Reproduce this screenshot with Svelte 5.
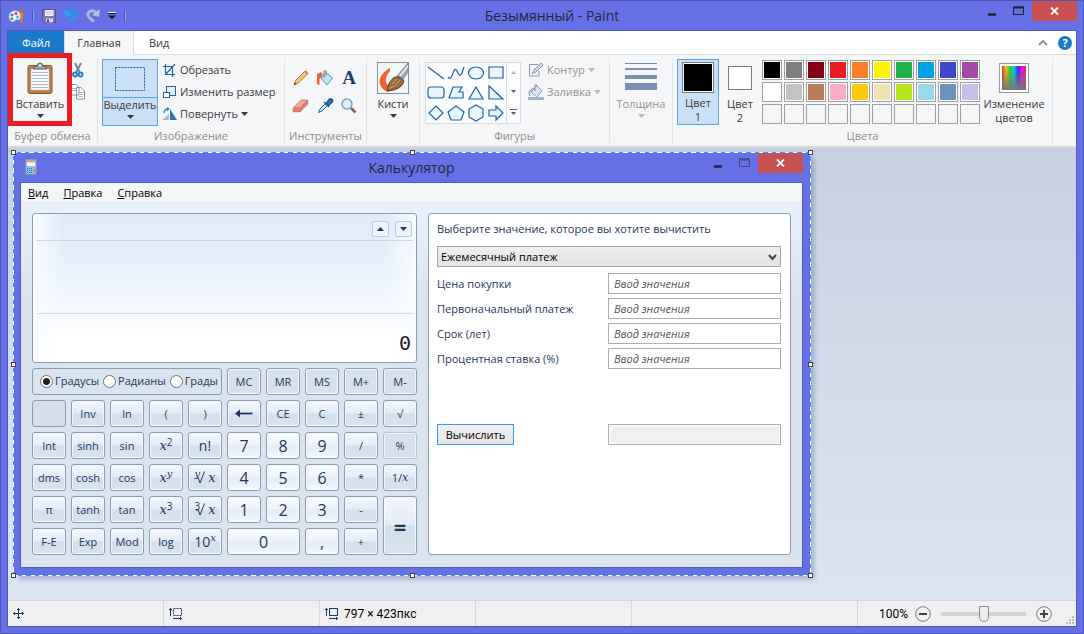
<script>
    const PALETTE = [
        "#000000", "#7f7f7f", "#880015", "#ed1c24", "#ff7f27",
        "#fff200", "#22b14c", "#00a2e8", "#3f48cc", "#a349a4",
        "#ffffff", "#c3c3c3", "#b97a57", "#ffaec9", "#ffc90e",
        "#efe4b0", "#b5e61d", "#99d9ea", "#7092be", "#c8bfe7",
        "", "", "", "", "", "", "", "", "", "",
    ];

    const SHAPES = [
        "M2 4 L18 16",
        "M2 14 C7 20 7 1 11 8 C14 15 15 13 18 4",
        "M10 4 C20 4 20 16 10 16 C0 16 0 4 10 4 Z",
        "M3 4 H17 V15 H3 Z",
        "M5 4 H15 Q18 4 18 7 V12 Q18 15 15 15 H5 Q2 15 2 12 V7 Q2 4 5 4 Z",
        "M7 4 H16 L13 9 H17 V15 H3 Z",
        "M10 4 L17 16 H3 Z",
        "M3 3 L17 16 H3 Z",
        "M10 3 L17 10 L10 17 L3 10 Z",
        "M10 3 L18 9 L15 17 H5 L2 9 Z",
        "M10 2 L17 6 V14 L10 18 L3 14 V6 Z",
        "M3 7 H10 V3 L17 10 L10 17 V13 H3 Z",
    ];

    // base/sup/root: parts of the formula keys, kind: look and span
    const KEYS = [
        { text: "MC", kind: "memory" }, { text: "MR", kind: "memory" }, { text: "MS", kind: "memory" },
        { text: "M+", kind: "memory" }, { text: "M-", kind: "memory" },
        { text: "", kind: "blank" }, { text: "Inv" }, { text: "ln" }, { text: "(" }, { text: ")" },
        { arrow: true }, { text: "CE" }, { text: "C" }, { text: "±" }, { text: "√" },
        { text: "Int" }, { text: "sinh" }, { text: "sin" }, { base: "x", sup: "2" }, { text: "n!", kind: "large" },
        { text: "7", kind: "digit" }, { text: "8", kind: "digit" }, { text: "9", kind: "digit" }, { text: "/" }, { text: "%", kind: "off" },
        { text: "dms" }, { text: "cosh" }, { text: "cos" }, { base: "x", sup: "y", italic: true }, { root: "y" },
        { text: "4", kind: "digit" }, { text: "5", kind: "digit" }, { text: "6", kind: "digit" }, { text: "*" }, { fraction: true },
        { text: "π" }, { text: "tanh" }, { text: "tan" }, { base: "x", sup: "3" }, { root: "3" },
        { text: "1", kind: "digit" }, { text: "2", kind: "digit" }, { text: "3", kind: "digit" }, { text: "-" }, { text: "=", kind: "equals" },
        { text: "F-E" }, { text: "Exp" }, { text: "Mod" }, { text: "log" }, { power: true },
        { text: "0", kind: "digit wide" }, { text: ",", kind: "digit" }, { text: "+" },
    ];

    const ANGLES = ["Градусы", "Радианы", "Грады"];
    const FIELDS = ["Цена покупки", "Первоначальный платеж", "Срок (лет)", "Процентная ставка (%)"];
    const HANDLES = ["nw", "n", "ne", "e", "se", "s", "sw", "w"];

    let angle = $state("Градусы");
    let zoom = $state(50);
</script>

{#snippet down()}
    <svg class="down" width="7" height="4" viewBox="0 0 7 4"><path d="M0 0 H7 L3.5 4 Z" fill="currentColor" /></svg>
{/snippet}

{#snippet windowButtons(dim)}
    <div class="window-buttons">
        <button aria-label="Свернуть"><svg width="10" height="10"><path d="M1 8.5 H9" stroke="#22242c" stroke-width="2.4" /></svg></button>
        <button aria-label="Развернуть" class:dim><svg width="11" height="10"><path d="M.5 1 H10.5 M.5 1 V8.5 H10.5 V1" fill="none" stroke="#22242c" stroke-width="1.2" /><path d="M0 1.5 H11" stroke="#22242c" stroke-width="2" /></svg></button>
        <button aria-label="Закрыть" class="close"><svg width="9" height="8"><path d="M1 .5 L8 7.5 M8 .5 L1 7.5" stroke="#fff" stroke-width="1.8" /></svg></button>
    </div>
{/snippet}

<div class="paint">
    <header class="titlebar">
        <div class="quick">
            <svg width="16" height="16" viewBox="0 0 16 16">
                <path d="M1 9 C1 4 5 2 9 3 C13 4 14 8 12 11 C11 13 9 11 7.500 12 C6 15 1 14 1 9Z" fill="#eef5fb" stroke="#8eaed0" stroke-width=".7" />
                <circle cx="4" cy="7" r="1.500" fill="#3c7bd0" /><circle cx="8" cy="5.500" r="1.500" fill="#d9403a" />
                <circle cx="3.800" cy="10.800" r="1.500" fill="#3fae49" /><circle cx="9.500" cy="9" r="1.500" fill="#4fb4ee" />
                <path d="M12 5 L12.500 15 L14 15 L15 5 Z" fill="#e8842c" /><path d="M11.500 5 L12.500 1 L15.500 0 L15.500 5Z" fill="#b86f42" />
            </svg>
            <i class="quick-sep"></i>
            <button aria-label="Сохранить" class="save"><svg width="14" height="14" viewBox="0 0 14 14"><path d="M.5 .5 H13.500 V13.500 H2 L.5 12Z" fill="#8574b4" stroke="#5d4f96" /><path d="M3 1 H11.500 V7 H3Z" fill="#f4f4fa" /><path d="M4 3 H10.500 M4 5 H10.500" stroke="#c0bedc" /><path d="M4 9.500 H11 V13.500 H4Z" fill="#d6d7e6" /><path d="M5 10.500 H7 V13.500 H5Z" fill="#494270" /></svg></button>
            <button aria-label="Отменить"><svg width="14" height="15" viewBox="0 0 14 15"><path d="M3 5 C8 0 15 5 11 9 C10 11 8 12 6 13.500" fill="none" stroke="#1e9bec" stroke-width="3" /><path d="M0 1 L1 9 L8 7Z" fill="#25a4ef" /></svg></button>
            <button aria-label="Повторить"><svg width="14" height="15" viewBox="0 0 14 15"><path d="M11 5 C6 0 -1 5 3 9 C4 11 6 12 8 13.500" fill="none" stroke="#aab9d4" stroke-width="3" /><path d="M14 1 L13 9 L6 7Z" fill="#b4c3da" /></svg></button>
            <button aria-label="Настройка панели" class="more"><svg width="8" height="7"><path d="M0 .5 H8" stroke="#fff" /><path d="M0 1.500 H8" stroke="#111" /><path d="M0 3.500 H8 L4 7Z" fill="#111" /></svg></button>
            <i class="quick-sep"></i>
        </div>
        <h1>Безымянный - Paint</h1>
        {@render windowButtons(false)}
    </header>

    <main class="client">
        <nav class="tabs">
            <button class="tab file">Файл</button>
            <button class="tab active">Главная</button>
            <button class="tab">Вид</button>
            <span class="tabs-rest">
                <svg width="10" height="6"><path d="M1 5 L5 1 L9 5" fill="none" stroke="#929292" stroke-width="2" /></svg>
                <button class="help" aria-label="Справка">?</button>
            </span>
        </nav>

        <div class="ribbon">
            <section class="group clipboard">
                <div class="group-body">
                    <button class="big paste">
                        <svg width="28" height="32" viewBox="0 0 28 32">
                            <rect x="2" y="3.500" width="24" height="28" rx="2" fill="#b98042" stroke="#87582c" />
                            <path d="M5 7 H23 V28 H5Z" fill="#fdfdff" stroke="#c8c8d4" stroke-width=".6" />
                            <path d="M6 10.500 H22 M6 13.500 H22 M6 16.500 H22 M6 19.500 H22 M6 22.500 H22 M6 25.500 H22" stroke="#b2b9d8" />
                            <path d="M7 7 Q7 4 11 4 Q11 1 14 1 Q17 1 17 4 Q21 4 21 7Z" fill="#a2a6ac" stroke="#595e66" /><circle cx="14" cy="3.500" r="1" fill="#fff" />
                        </svg>
                        <span>Вставить</span>
                        {@render down()}
                    </button>
                    <div class="mini">
                        <button aria-label="Вырезать"><svg width="16" height="16" viewBox="0 0 16 16"><path d="M4 1 L9 11 M10 1 L5 11" stroke="#697f9d" stroke-width="1.800" /><circle cx="4" cy="12.500" r="2" fill="none" stroke="#1c7bd1" stroke-width="1.800" /><circle cx="9.500" cy="12.500" r="2" fill="none" stroke="#1c7bd1" stroke-width="1.800" /></svg></button>
                        <button aria-label="Копировать"><svg width="18" height="17" viewBox="0 0 18 17"><path d="M-1 1.500 H5 L8 4.500 V12 H-1Z M5.500 4.500 H10 L13.500 8 V16 H5.500Z" fill="#fff" stroke="#8a8f96" /><path d="M1 5.500 H5 M1 7.500 H5 M7.500 9.500 H11.500 M7.500 11.500 H11.500 M7.500 13.500 H11.500" stroke="#9db4cf" /></svg></button>
                    </div>
                </div>
                <h2>Буфер обмена</h2>
            </section>

            <section class="group image">
                <div class="group-body">
                    <div class="split">
                        <button aria-label="Прямоугольная область"><svg width="32" height="26" viewBox="0 0 32 26"><rect x="1.500" y="1.500" width="29" height="23" fill="none" stroke="#1667a8" stroke-dasharray="2 1" /></svg></button>
                        <button class="split-label">Выделить {@render down()}</button>
                    </div>
                    <div class="commands">
                        <button><svg width="15" height="15" viewBox="0 0 15 15"><path d="M1 3.500 H10.500 V14 M3.500 1 V11.500 H13 M3.500 11.500 L13 1" fill="none" stroke="#1c65a6" stroke-width="1.200" /></svg>Обрезать</button>
                        <button><svg width="15" height="15" viewBox="0 0 15 15"><rect x="4.500" y="1.500" width="9" height="9" fill="#e8f2fd" stroke="#1c65a6" /><rect x="1.500" y="7.500" width="6" height="5" fill="#fff" stroke="#1c65a6" /></svg>Изменить размер</button>
                        <button><svg width="15" height="15" viewBox="0 0 15 15"><path d="M0 13 L7 7 V13Z" fill="#b8bcc2" /><path d="M8 2 V13 H15Z" fill="#2677b9" /><path d="M2 6 Q2 2 6 2" fill="none" stroke="#2e87ca" stroke-width="1.300" /><path d="M5 0 L8 2 L5 4Z" fill="#2e87ca" /></svg>Повернуть {@render down()}</button>
                    </div>
                </div>
                <h2>Изображение</h2>
            </section>

            <section class="group tools">
                <div class="group-body tool-grid">
                    <button aria-label="Карандаш"><svg viewBox="0 0 18 18"><path d="M2 16 L3.500 11.500 L12.500 2.500 L15.500 5 L6.500 14Z" fill="#f3c375" stroke="#9d6a3b" stroke-width=".8" /><path d="M12.500 2.500 L14 1.500 L16.500 4 L15.500 5Z" fill="#d86c62" /><path d="M2 16 L3 13.500 L4.500 15Z" fill="#333" /></svg></button>
                    <button aria-label="Заливка"><svg viewBox="0 0 18 18"><path d="M5 9 L10 3.500 L16.500 9 L11 16Z" fill="#c4e4f6" stroke="#5893bb" /><path d="M1 5 L5 3 L7 6 L3.500 10 V16 Q0 16 1 10Z" fill="#ec6334" /><path d="M8 9 V3 Q8 .5 10 2 V7" fill="none" stroke="#747e8a" /></svg></button>
                    <button aria-label="Текст" class="letter">A</button>
                    <button aria-label="Ластик"><svg viewBox="0 0 18 18"><path d="M1 11 L9 3 H16 L8 11Z" fill="#f3a59b" stroke="#c17167" stroke-width=".7" /><path d="M1 11 H8 V15 H1Z M8 11 L16 3 V7 L8 15Z" fill="#df8176" stroke="#c17167" stroke-width=".5" /></svg></button>
                    <button aria-label="Палитра"><svg viewBox="0 0 18 18"><path d="M2.500 15.500 L4 12 L10 6 L12 8 L6 14Z" fill="#c8e5fa" stroke="#2e5d91" /><path d="M8 5 L13 10 M10 7 L13 2.500 Q15 1 16.500 3 Q17 5 15 6 L12 9Z" fill="#2a77bb" stroke="#1c5690" stroke-width="1.500" /></svg></button>
                    <button aria-label="Масштаб"><svg viewBox="0 0 18 18"><circle cx="7" cy="7" r="5" fill="#d9edfc" stroke="#8b9db5" stroke-width="1.500" /><path d="M11 11 L15.500 15.500" stroke="#8e6041" stroke-width="2.500" /></svg></button>
                </div>
                <h2>Инструменты</h2>
            </section>

            <section class="group brushes">
                <div class="group-body">
                    <button class="big">
                        <svg width="32" height="32" viewBox="0 0 32 32">
                            <rect x=".5" y=".5" width="31" height="31" fill="#f2f5fa" stroke="#8b929c" />
                            <path d="M13 6 C0 13 -1 25 11 30 L19 26 C9 25 5 18 13 9Z" fill="#ef642b" />
                            <path d="M20 14 L31 1 V10 L25 19Z" fill="#9ea9b9" stroke="#5f6c7e" stroke-width=".6" /><path d="M23 14 L31 4" stroke="#f4f6fa" stroke-width="1.500" />
                            <path d="M10 29 Q11 19 18 15 Q24 14 27 19 Q25 28 10 29Z" fill="#9a6c3d" stroke="#664425" /><path d="M13 26 Q19 25 23 18 M15 22 L20 17" stroke="#d0a874" fill="none" />
                        </svg>
                        <span>Кисти</span>
                        {@render down()}
                    </button>
                </div>
            </section>

            <section class="group shapes">
                <div class="group-body">
                    <div class="gallery">
                        <div class="shape-grid">
                            {#each SHAPES as d}
                                <button aria-label="Фигура"><svg width="20" height="20" viewBox="0 0 20 20"><path {d} fill={d === SHAPES[0] || d === SHAPES[1] ? "none" : "#e9f4fc"} stroke="#1d65a4" stroke-width="1.200" /></svg></button>
                            {/each}
                        </div>
                        <div class="gallery-scroll">
                            <button aria-label="Вверх" disabled><svg width="5" height="3"><path d="M0 3 L2.500 0 L5 3Z" fill="#a5adbd" /></svg></button>
                            <button aria-label="Вниз"><svg width="5" height="3"><path d="M0 0 L2.500 3 L5 0Z" fill="#4a5a80" /></svg></button>
                            <button aria-label="Все фигуры"><svg width="7" height="6"><path d="M0 .5 H7" stroke="#4a5a80" /><path d="M1 3 L3.500 6 L6 3Z" fill="#4a5a80" /></svg></button>
                        </div>
                    </div>
                    <div class="commands off">
                        <button><svg width="16" height="16" viewBox="0 0 16 16"><path d="M10 2.500 H1.500 V14 H11 V9" fill="none" stroke="#8598b8" /><path d="M4 12 L6 8 L13 1 L15 3 L8 10Z" fill="#d1d8e5" stroke="#8798b3" /></svg>Контур {@render down()}</button>
                        <button><svg width="16" height="16" viewBox="0 0 16 16"><path d="M0 13 H16 V16 H0Z" fill="#a3b1ca" /><path d="M3 8 L9 2 L14 7 L9 13Z" fill="#dce4ef" stroke="#8da0bd" /><path d="M2 12 Q0 8 3 6 L6 4 M7 7 V2 Q8 0 9 2" fill="none" stroke="#92a4c0" stroke-width="1.500" /></svg>Заливка {@render down()}</button>
                    </div>
                </div>
                <h2>Фигуры</h2>
            </section>

            <section class="group thickness">
                <div class="group-body">
                    <button class="big off">
                        <svg width="32" height="32" viewBox="0 0 32 32"><path d="M0 1 H32 V2 H0Z M0 6 H32 V8 H0Z M0 13 H32 V17 H0Z M0 21 H32 V28 H0Z" fill="#7b8fb2" /></svg>
                        <span>Толщина</span>
                        {@render down()}
                    </button>
                </div>
            </section>

            <section class="group colors">
                <div class="group-body">
                    <button class="big color-pick chosen"><span class="sample"><i></i></span><span>Цвет</span><span>1</span></button>
                    <button class="big color-pick"><span class="sample second"><i></i></span><span>Цвет</span><span>2</span></button>
                    <div class="palette">
                        {#each PALETTE as color}
                            <button aria-label="Цвет {color}" class:empty={!color}><i style:background={color}></i></button>
                        {/each}
                    </div>
                    <button class="big edit-colors">
                        <span class="spectrum"></span>
                        <span>Изменение</span>
                        <span>цветов</span>
                    </button>
                </div>
                <h2>Цвета</h2>
            </section>
        </div>

        <div class="canvas">
            <div class="selection">
                {#each HANDLES as side}<i class="handle {side}"></i>{/each}
                <article class="calc">
                    <header class="calc-title">
                        <svg width="12" height="16" viewBox="0 0 12 16"><rect x=".5" y=".5" width="11" height="15" fill="#8fc0e4" stroke="#6595be" /><path d="M1 1.500 H11" stroke="#f2a136" stroke-width="1.500" /><path d="M2 3.500 H10 V7 H2Z" fill="#f5faff" /><path d="M2 9.500 H8 M2 11.500 H8 M2 13.500 H8" stroke="#3775af" stroke-dasharray="1 1" /><path d="M9 10 H10.500 V14 H9Z" fill="#ea7c2f" /></svg>
                        <h1>Калькулятор</h1>
                        {@render windowButtons(true)}
                    </header>
                    <div class="calc-client">
                        <nav class="menu">
                            <button><u>В</u>ид</button>
                            <button><u>П</u>равка</button>
                            <button><u>С</u>правка</button>
                        </nav>
                        <div class="calc-body">
                            <div class="machine">
                                <div class="display">
                                    <div class="history">
                                        <button aria-label="Вверх"><svg width="7" height="4"><path d="M0 4 L3.500 0 L7 4Z" fill="#1e395b" /></svg></button>
                                        <button aria-label="Вниз"><svg width="7" height="4"><path d="M0 0 L3.500 4 L7 0Z" fill="#1e395b" /></svg></button>
                                    </div>
                                    <output class="result">0</output>
                                </div>
                                <div class="keypad">
                                    <fieldset class="angles">
                                        {#each ANGLES as name}
                                            <label><input type="radio" name="angle" value={name} bind:group={angle} />{name}</label>
                                        {/each}
                                    </fieldset>
                                    {#each KEYS as key}
                                        <button class="key {key.kind ?? ''}" aria-label={key.kind === "blank" ? "Пусто" : null} disabled={key.kind === "off" || key.kind === "blank"}>
                                            {#if key.arrow}
                                                <svg width="18" height="9" aria-label="Backspace"><path d="M3 4.500 H17.500" stroke="#1e395b" stroke-width="1.800" /><path d="M0 4.500 L5 .5 V8.500Z" fill="#1e395b" /></svg>
                                            {:else if key.base}
                                                <span class="math">{key.base}</span><sup class:math={key.italic}>{key.sup}</sup>
                                            {:else if key.root}
                                                <sup class="degree" class:math={key.root === "y"}>{key.root}</sup>
                                                <svg class="radical" width="9" height="13" viewBox="0 0 9 13"><path d="M0 7.500 L2 6.500 L4 12 L8.500 .5" fill="none" stroke="#1e395b" /></svg>
                                                <span class="math">x</span>
                                            {:else if key.fraction}
                                                1/<span class="math small">x</span>
                                            {:else if key.power}
                                                <span class="ten">10</span><sup class="math">x</sup>
                                            {:else}
                                                {key.text}
                                            {/if}
                                        </button>
                                    {/each}
                                </div>
                            </div>
                            <form class="mortgage" onsubmit={(e) => e.preventDefault()}>
                                <label class="question" for="target">Выберите значение, которое вы хотите вычистить</label>
                                <div class="select">
                                    <select id="target"><option>Ежемесячный платеж</option></select>
                                    <svg width="9" height="7"><path d="M1 1 L4.500 5 L8 1" fill="none" stroke="#444" stroke-width="2" /></svg>
                                </div>
                                {#each FIELDS as field, i}
                                    <div class="field">
                                        <label for="field{i}">{field}</label>
                                        <input id="field{i}" type="text" placeholder="Ввод значения" />
                                    </div>
                                {/each}
                                <div class="field total">
                                    <button type="submit" class="calculate">Вычислить</button>
                                    <input type="text" aria-label="Результат" readonly />
                                </div>
                            </form>
                        </div>
                    </div>
                </article>
            </div>
        </div>

        <footer class="status">
            <div class="cell"><svg width="11" height="11" viewBox="0 0 11 11"><path d="M0 5.500 H11 M5.500 0 V11 M4 1.500 H7 M4 9.500 H7 M1.500 4 V7 M9.500 4 V7" stroke="#1e395b" /></svg></div>
            <div class="cell"><svg width="14" height="13" viewBox="0 0 14 13"><rect x="4.500" y="1.500" width="8" height="7" fill="none" stroke="#1e395b" stroke-dasharray="2 1" /><path d="M1.500 9 V1 M0 2.500 H3 M4 11.500 H13 M11.500 10 V13" stroke="#1e395b" /></svg></div>
            <div class="cell"><svg width="14" height="13" viewBox="0 0 14 13"><rect x="4.500" y="1.500" width="8" height="7" fill="#e6f0fb" stroke="#1e395b" /><path d="M1.500 9 V1 M0 2.500 H3 M4 11.500 H13 M11.500 10 V13" stroke="#1e395b" /></svg>797 × 423пкс</div>
            <div class="cell"></div>
            <div class="cell rest"></div>
            <div class="zoom">
                <label for="zoom">100%</label>
                <button aria-label="Уменьшить"><svg width="16" height="16"><circle cx="8" cy="8" r="7.300" fill="#f3f3f3" stroke="#777" /><path d="M4 8 H12" stroke="#444" stroke-width="2" /></svg></button>
                <input id="zoom" type="range" min="0" max="100" bind:value={zoom} />
                <button aria-label="Увеличить"><svg width="16" height="16"><circle cx="8" cy="8" r="7.300" fill="#f3f3f3" stroke="#777" /><path d="M4 8 H12 M8 4 V12" stroke="#444" stroke-width="2" /></svg></button>
                <svg class="grip" width="8" height="8"><path d="M6 0 H8 V2 H6Z M3 3 H5 V5 H3Z M6 3 H8 V5 H6Z M0 6 H2 V8 H0Z M3 6 H5 V8 H3Z M6 6 H8 V8 H6Z" fill="#bfbfbf" /></svg>
            </div>
        </footer>
    </main>
</div>

<style>
    :global(body) {
        margin: 0;
        overflow: hidden;
    }

    .paint,
    .paint * {
        box-sizing: border-box;
    }

    .paint {
        display: flex;
        flex-direction: column;
        height: 100vh;
        padding: 0 6px 6px;

        border: 1px solid #4e55b2;
        background: #6670e6;
        color: #3b3b3b;
        font: 11px/14px "Open Sans", "Noto Sans", sans-serif;
    }

    button {
        margin: 0;
        padding: 0;

        border: 0;
        background: none;
        color: inherit;
        font: inherit;
    }

    svg {
        display: block;
        flex: none;
    }

    h1,
    h2 {
        margin: 0;
        font-weight: normal;
    }

    /* title bars */
    .titlebar {
        display: flex;
        align-items: flex-start;
        height: 29px;
    }

    .quick {
        display: flex;
        align-items: center;
        gap: 8px;
        height: 29px;
        padding-left: 1px;
    }

    .quick-sep {
        width: 2px;
        height: 12px;
        border-left: 1px solid #4a50a8;
        border-right: 1px solid #9aa2f2;
    }

    h1 {
        flex: 1;
        color: #23263a;
        font-size: 14px;
        line-height: 29px;
        text-align: center;
    }

    .window-buttons {
        display: flex;
        align-items: flex-start;
        justify-content: flex-end;
    }

    .window-buttons button {
        display: flex;
        align-items: center;
        justify-content: center;
        width: 27px;
        height: 20px;
    }

    .window-buttons .close {
        width: 45px;
        background: #c75050;
    }

    .window-buttons .dim {
        opacity: 0.5;
    }

    .client {
        display: flex;
        flex: 1;
        flex-direction: column;
        min-height: 0;

        border: 1px solid #5259bd;
        background: #f5f6f7;
    }

    /* tabs */
    .tabs {
        display: flex;
        height: 24px;
        border-bottom: 1px solid #dadbdc;
        background: #fff;
    }

    .tab {
        height: 24px;
        padding: 0 15px;
    }

    .tab.file {
        width: 56px;
        height: 23px;
        padding: 0;
        background: #1979ca;
        color: #fff;
    }

    .tab.active {
        width: 70px;
        padding: 0;
        border: 1px solid #dadbdc;
        border-width: 0 1px;
        background: #f5f6f7;
    }

    .tabs-rest {
        display: flex;
        align-items: center;
        gap: 10px;
        margin-left: auto;
        padding-right: 4px;
    }

    .help {
        width: 14px;
        height: 14px;
        border-radius: 50%;
        background: #1979ca;
        color: #fff;
        font-weight: bold;
    }

    /* ribbon */
    .ribbon {
        display: flex;
        flex: none;
        height: 93px;
        padding: 3px 0;
        border-bottom: 2px solid #d6d9dc;
    }

    .group {
        display: flex;
        flex: none;
        flex-direction: column;
        padding: 1px 4px 0;
        border-right: 1px solid #e2e3e4;
    }

    .group-body {
        display: flex;
        height: 72px;
    }

    h2 {
        color: #8d8d8d;
        font-size: 11px;
        line-height: 14px;
        text-align: center;
        white-space: nowrap;
    }

    .clipboard { width: 90px; }
    .image { width: 187px; }
    .tools { width: 82px; }
    .brushes { width: 53px; }
    .shapes { width: 190px; }
    .thickness { width: 63px; }
    .colors { width: 380px; }

    .big {
        display: flex;
        flex-direction: column;
        align-items: center;
        width: 100%;
        height: 66px;
        padding-top: 3px;
        white-space: nowrap;
    }

    .big > span:nth-child(2) {
        margin-top: 3px;
    }

    .big .down {
        margin-top: 3px;
    }

    .off {
        color: #929292;
    }

    .off .down {
        opacity: 0.6;
    }

    .paste {
        position: relative;
        flex: none;
        width: 56px;
    }

    .paste::after {
        position: absolute;
        inset: -6px -4px -1px;
        z-index: 1;
        border: 5px solid #ed1c24;
        content: "";
    }

    .mini {
        display: flex;
        flex-direction: column;
        gap: 5px;
        padding: 3px 0 0 3px;
    }

    .split {
        display: flex;
        flex: none;
        flex-direction: column;
        width: 56px;
        height: 67px;
        border: 1px solid #62a2e4;
        background: #c9e0f7;
    }

    .split button {
        display: flex;
        flex-direction: column;
        align-items: center;
        justify-content: center;
        height: 37px;
    }

    .split .split-label {
        justify-content: flex-start;
        gap: 3px;
        height: 28px;
        border-top: 1px solid #62a2e4;
    }

    .commands {
        display: flex;
        flex-direction: column;
        padding-left: 4px;
    }

    .commands button {
        display: flex;
        align-items: center;
        gap: 3px;
        height: 22px;
        white-space: nowrap;
    }

    .tool-grid {
        display: grid;
        grid-template-columns: repeat(3, 24px);
        grid-auto-rows: 28px;
        padding-top: 5px;
    }

    .tool-grid button {
        display: flex;
        align-items: center;
        justify-content: center;
    }

    .tool-grid svg {
        width: 18px;
        height: 18px;
    }

    .letter {
        color: #1f3d6e;
        font: bold 19px/20px "Liberation Serif", serif;
    }

    .gallery {
        display: flex;
        flex: none;
        height: 62px;
        margin: 3px 3px 3px 1px;
        border: 1px solid #dadbdc;
        background: #fbfcfd;
    }

    .shape-grid {
        display: grid;
        grid-template-columns: repeat(4, 20px);
        grid-auto-rows: 20px;
    }

    .gallery-scroll {
        display: grid;
        width: 14px;
        border-left: 1px solid #dadbdc;
    }

    .gallery-scroll button {
        display: flex;
        align-items: center;
        justify-content: center;
    }

    .color-pick {
        flex: none;
        width: 42px;
    }

    .color-pick.chosen {
        border: 1px solid #62a2e4;
        background: #c9e0f7;
        padding-top: 2px;
    }

    .sample {
        display: flex;
        width: 32px;
        height: 32px;
        padding: 1px;
        border: 1px solid #7a7a7a;
        background: #fff;
    }

    .sample i {
        flex: 1;
        background: #000;
    }

    .sample.second {
        width: 24px;
        height: 24px;
        margin: 4px 0;
    }

    .sample.second i {
        background: #fff;
    }

    .palette {
        display: grid;
        flex: none;
        grid-template-columns: repeat(10, 20px);
        grid-auto-rows: 20px;
        gap: 2px;
        padding-top: 1px;
        padding-left: 1px;
    }

    .palette button {
        display: flex;
        padding: 1px;
        border: 1px solid #a0a0a0;
        background: #fff;
    }

    .palette .empty {
        background: none;
    }

    .palette i {
        flex: 1;
    }

    .edit-colors {
        flex: 1;
        width: auto;
    }

    .spectrum {
        width: 28px;
        height: 28px;
        margin: 2px;
        border: 2px solid #fff;
        outline: 1px solid #999;
        background:
            linear-gradient(transparent, #777),
            linear-gradient(90deg, #f22, #fc0, #2d2, #0dd, #22f, #f0f, #f22);
    }

    /* canvas */
    .canvas {
        flex: 1;
        min-height: 0;
        padding: 4px 5px;
        overflow: hidden;
        background: linear-gradient(#c6d0e1, #dce6f2);
    }

    .selection {
        position: relative;
        width: fit-content;
        padding: 1px;
        background: repeating-linear-gradient(135deg, #fff 0 3px, #3399ff 3px 6px);
        box-shadow: 5px 5px 4px -1px rgba(110, 120, 165, 0.4);
    }

    .handle {
        position: absolute;
        width: 5px;
        height: 5px;
        border: 1px solid #444;
        background: #fff;
    }

    .nw, .n, .ne { top: -2px; }
    .sw, .s, .se { bottom: -2px; }
    .nw, .w, .sw { left: -2px; }
    .ne, .e, .se { right: -2px; }
    .n, .s { left: calc(50% - 2px); }
    .e, .w { top: calc(50% - 2px); }

    .calc {
        padding: 0 7px 7px 6px;
        background: #6670e6;
        color: #1e395b;
    }

    .calc-title {
        display: grid;
        grid-template-columns: 1fr auto 1fr;
        align-items: start;
        height: 29px;
    }

    .calc-title > svg {
        margin: 6px 5px;
    }

    .calc-client {
        border: 1px solid #5259bd;
        background: linear-gradient(#ecf4ff, #d9e4ef 30%);
    }

    .menu {
        display: flex;
        gap: 15px;
        height: 20px;
        padding: 0 7px;
        border-bottom: 1px solid #e8e9e6;
        background: #f5f6f7;
        color: #000;
    }

    .calc-body {
        display: flex;
        gap: 11px;
        padding: 10px 11px 12px;
    }

    .machine {
        display: flex;
        flex-direction: column;
        gap: 5px;
    }

    .display {
        display: flex;
        flex-direction: column;
        height: 150px;
        padding: 3px;

        border: 1px solid #8e9cb3;
        border-radius: 3px;
        background:
            linear-gradient(90deg, #f8fbff, transparent 8% 92%, #f8fbff),
            linear-gradient(#e0ebf8, #e8f1fc 40%, #fff 85%);
    }

    .history {
        display: flex;
        align-items: center;
        justify-content: flex-end;
        gap: 6px;
        height: 24px;
        padding-right: 1px;
        border-bottom: 1px solid #ccd5e0;
    }

    .history button {
        display: flex;
        align-items: center;
        justify-content: center;
        width: 17px;
        height: 16px;
        border: 1px solid #bfcbdc;
        border-radius: 2px;
        background: #edf4fc;
    }

    .result {
        margin-top: 72px;
        padding: 17px 2px 0;
        border-top: 1px solid #d5dce5;
        color: #222;
        font: 20px/24px "DejaVu Sans Mono", monospace;
        text-align: right;
    }

    .keypad {
        display: grid;
        grid-template-columns: repeat(10, 34px);
        grid-auto-rows: 27px;
        gap: 5px;
    }

    .angles {
        display: flex;
        grid-column: span 5;
        align-items: center;
        justify-content: space-between;
        min-width: 0;
        margin: 0;
        padding: 0 3px 1px 7px;
        border: 1px solid #8e9cb3;
        border-radius: 3px;
    }

    .angles label {
        display: flex;
        align-items: center;
        gap: 2px;
    }

    .angles input {
        width: 13px;
        height: 13px;
        margin: 0;
        border: 1px solid #707070;
        border-radius: 50%;
        background: #fff;
        appearance: none;
    }

    .angles input:checked {
        background: radial-gradient(circle, #222 0 3px, #fff 4px);
    }

    .key {
        display: flex;
        align-items: center;
        justify-content: center;

        border: 1px solid #8e9cb3;
        border-radius: 3px;
        background: linear-gradient(#f2f7fd, #e4ecf6 48%, #d3dfec 52%, #d8e3ef);
        box-shadow: inset 0 0 0 1px #f4f8fc;
    }

    .key.memory {
        background: #d6e1ed;
    }

    .key.blank {
        background: #d3deea;
        box-shadow: none;
    }

    .key.off {
        border-color: #b5c3d6;
        background: #d6e1ed;
        color: #1e395b;
    }

    .key.digit {
        background: linear-gradient(#fafcff, #eef3fa 48%, #e5ecf5 52%, #f4f8fd);
        font-size: 16px;
    }

    .key.large,
    .ten {
        font-size: 14px;
    }

    .wide {
        grid-column: span 2;
    }

    .equals {
        grid-row: span 2;
        font-size: 22px;
        font-weight: bold;
    }

    .math {
        font-family: "DejaVu Serif", serif;
        font-size: 13px;
        font-style: italic;
    }

    .math.small {
        font-size: 11px;
    }

    .key sup {
        align-self: flex-start;
        margin-top: 4px;
        font-size: 10px;
        line-height: 10px;
    }

    /* the degree sits in the crook of the radical sign */
    .key .degree {
        margin-right: -4px;
    }

    .radical {
        margin-right: 3px;
    }

    .mortgage {
        display: flex;
        flex-direction: column;
        gap: 4px;
        width: 363px;
        padding: 8px 9px 0 8px;

        border: 1px solid #8e9cb3;
        border-radius: 3px;
        background: #fff;
    }

    .question {
        padding-bottom: 6px;
    }

    .select {
        position: relative;
        margin-bottom: 2px;
    }

    .select svg {
        position: absolute;
        top: 8px;
        right: 4px;
        pointer-events: none;
    }

    select {
        display: block;
        width: 100%;
        height: 21px;
        padding: 0 3px;

        border: 1px solid #a5a5a5;
        border-radius: 0;
        background: linear-gradient(#efefef, #e3e3e3);
        color: #000;
        font: inherit;
        appearance: none;
    }

    .field {
        display: flex;
        align-items: center;
        justify-content: space-between;
    }

    .field input {
        width: 173px;
        height: 21px;
        padding: 0 5px;
        border: 1px solid #abadb3;
        background: #fff;
        font: inherit;
        font-style: italic;
    }

    .field input::placeholder {
        color: #555;
    }

    .total {
        margin-top: 51px;
    }

    .total input {
        background: #f0f0f0;
        box-shadow: inset 0 0 0 1px #fff;
    }

    .calculate {
        width: 77px;
        height: 21px;
        border: 1px solid #3399ff;
        background: linear-gradient(#f0f0f0, #e5e5e5);
        color: #000;
    }

    /* status bar */
    .status {
        display: flex;
        flex: none;
        height: 26px;
        border-top: 1px solid #d7d7d7;
        background: #f0f0f0;
        color: #000;
        font-family: Roboto, sans-serif;
        font-size: 12px;
    }

    .cell {
        display: flex;
        align-items: center;
        gap: 5px;
        width: 156px;
        padding-left: 5px;
        border-right: 1px solid #d7d7d7;
        white-space: nowrap;
    }

    .cell.rest {
        flex: 1;
    }

    .zoom {
        display: flex;
        align-items: center;
        gap: 7px;
        width: 218px;
        padding-left: 21px;
    }

    .zoom input {
        width: 85px;
        height: 18px;
        margin: 0 3px;
        background: linear-gradient(#d4d4d4, #d4d4d4) center / 100% 4px no-repeat;
        appearance: none;
    }

    .zoom input::-webkit-slider-thumb {
        width: 10px;
        height: 16px;
        border: 1px solid #8c8c8c;
        border-radius: 0 0 5px 5px;
        background: #ededed;
        appearance: none;
    }

    .grip {
        align-self: flex-end;
        margin: 0 2px 2px auto;
    }
</style>
